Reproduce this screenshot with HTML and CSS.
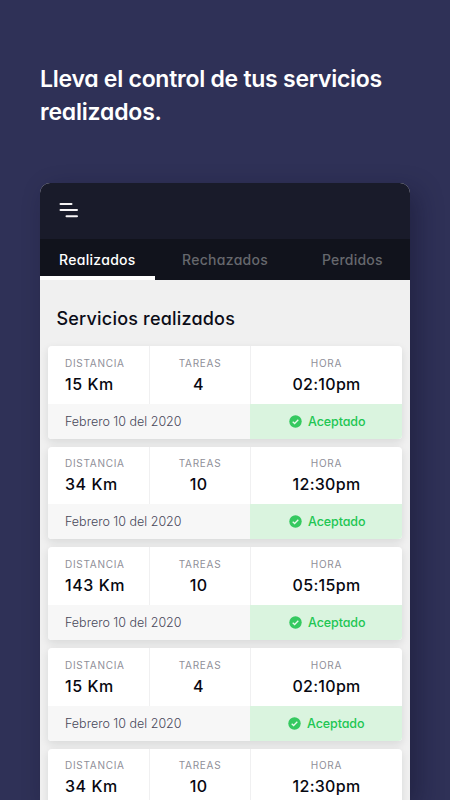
FILE: index.html
```html
<!DOCTYPE html>
<html lang="es">
<head>
<meta charset="utf-8">
<title>Servicios realizados</title>
<link rel="stylesheet" href="styles.css">
</head>
<body>
<h1 class="headline"><span class="line first">Lleva el control de tus servicios</span><span class="line second">realizados.</span></h1>
<main class="phone">
  <header class="bar">
    <svg class="menu" width="20" height="16" viewBox="0 0 20 16"><path d="M1.500 2h11M1.500 8h16.500M7.500 14.300h10.500" stroke="#f6f4f5" stroke-width="2" stroke-linecap="round"/></svg>
  </header>
  <nav class="tabs">
    <div class="tab active"><span>Realizados</span></div>
    <div class="tab mid"><span>Rechazados</span></div>
    <div class="tab last"><span>Perdidos</span></div>
  </nav>
  <h2 class="title"><span>Servicios realizados</span></h2>
  <section class="list" id="list"></section>
</main>
<script src="app.js"></script>
</body>
</html>
```
FILE: styles.css
```css
* { box-sizing: border-box; }
html { height: 800px; overflow: hidden; }
body {
  margin: 0;
  width: 450px;
  height: 800px;
  overflow: hidden;
  background: #2f3157;
  font-family: Inter, "Liberation Sans", sans-serif;
  font-feature-settings: "cv11";
}
.headline {
  margin: 0;
  height: 183px;
  padding: 63px 0 0 40px;
  color: #fff;
  font-size: 23px;
  font-weight: 600;
  line-height: 33px;
  white-space: nowrap;
}
.line { display: block; }
.first { letter-spacing: -0.26px; }
.second { letter-spacing: -0.2px; }
.phone {
  width: 370.400px;
  height: 617px;
  margin-left: 40px;
  border-radius: 10px 10px 0 0;
  background: #f0f0f0;
  box-shadow: 8px 8px 24px rgba(15, 16, 40, .4);
}
.bar {
  height: 56px;
  padding: 19px 0 0 18.500px;
  border-radius: 10px 10px 0 0;
  background: #191b2a;
}
.menu { display: block; fill: none; }
.tabs {
  display: flex;
  height: 41px;
  background: #11131c;
  color: #66686d;
  font-size: 14px;
  font-weight: 500;
  line-height: 41px;
  letter-spacing: .3px;
  white-space: nowrap;
}
.tab { height: 41px; }
.active {
  width: 115px;
  padding-left: 19px;
  color: #fff;
  border-bottom: 4px solid #fff;
}
.mid { width: 140px; padding-left: 27px; }
.last { padding-left: 27px; letter-spacing: .2px; }
.title {
  margin: 0;
  height: 66px;
  padding: 26px 0 0 16.500px;
  color: #0b0c17;
  font-size: 18px;
  font-weight: 500;
  line-height: 26px;
  letter-spacing: .2px;
}
.list { display: grid; gap: 8.200px; padding: 0 8px; }
.card {
  width: 354px;
  height: 92.500px;
  border-radius: 4px;
  overflow: hidden;
  background: #fff;
}
.shadow { border-radius: 4px; width: 354px; box-shadow: 0 3px 9px rgba(20, 30, 30, .11); }
.stats { display: grid; grid-template-columns: 101px 101px 152px; height: 57.500px; }
.stat { padding-top: 9.500px; text-align: center; border-left: 1px solid #f0f0f1; }
.stat:nth-child(2) .value { padding-right: 3px; }
.stat:first-child { padding-left: 17px; text-align: left; border: 0; }
.label { color: #8f8f99; font-size: 10px; line-height: 15px; letter-spacing: .72px; }
.value { color: #070811; font-size: 16px; font-weight: 500; line-height: 26px; letter-spacing: .3px; }
.stat:first-child .value { letter-spacing: .55px; }
.foot { display: grid; grid-template-columns: 202px 152px; height: 35px; font-size: 12.500px; line-height: 35px; }
.date { padding-left: 17px; background: #f7f7f7; color: #47475a; font-weight: 300; }
.state {
  display: flex;
  align-items: center;
  padding-left: 39px;
  gap: 6px;
  background: #daf4df;
  color: #21c653;
  font-weight: 500;
  letter-spacing: -.1px;
}
.shadow:nth-child(4) .state { padding-left: 38px; }
```
FILE: app.js
```javascript
const services = [
  ["15 Km", "4", "02:10pm"],
  ["34 Km", "10", "12:30pm"],
  ["143 Km", "10", "05:15pm"],
  ["15 Km", "4", "02:10pm"],
  ["34 Km", "10", "12:30pm"]
];
const labels = ["DISTANCIA", "TAREAS", "HORA"];
const foot = `
    <div class="foot">
      <div class="date"><span>Febrero 10 del 2020</span></div>
      <div class="state"><svg width="13" height="13" viewBox="0 0 13 13"><circle cx="6.500" cy="6.500" r="6.200" fill="#35c960"/><path d="M3.700 6.800l1.900 1.700 3.700-3.700" fill="none" stroke="#e9faed" stroke-width="1.300"/></svg><span>Aceptado</span></div>
    </div>`;
document.getElementById("list").innerHTML = services.map((s, n) => `
  <div class="shadow"><article class="card">
    <div class="stats">${s.map((v, i) => `<div class="stat"><div class="label"><span>${labels[i]}</span></div><div class="value"><span>${v}</span></div></div>`).join("")}</div>
    ${n < services.length - 1 ? foot : ""}
  </article></div>`).join("");
```
